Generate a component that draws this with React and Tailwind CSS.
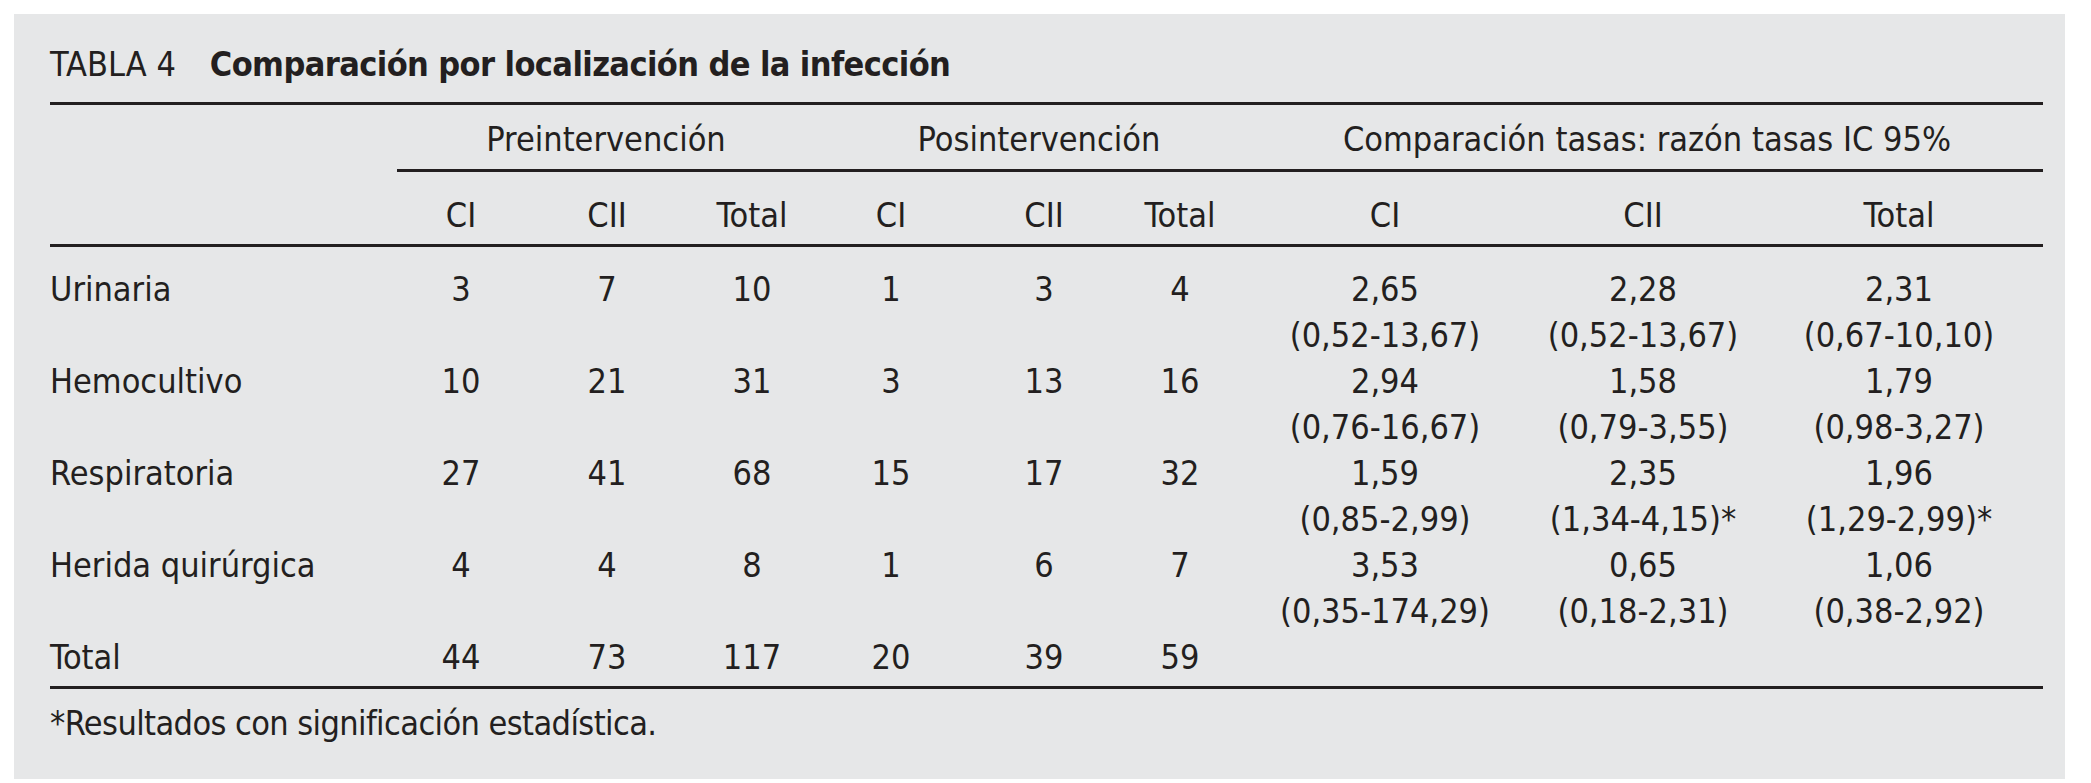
const GRID = 'grid grid-cols-[347px_128px_164px_126px_152px_154px_118px_292px_224px_288px]';

const rows = [
  { label: 'Urinaria', n: ['3', '7', '10', '1', '3', '4'], r: [['2,65', '(0,52-13,67)'], ['2,28', '(0,52-13,67)'], ['2,31', '(0,67-10,10)']] },
  { label: 'Hemocultivo', n: ['10', '21', '31', '3', '13', '16'], r: [['2,94', '(0,76-16,67)'], ['1,58', '(0,79-3,55)'], ['1,79', '(0,98-3,27)']] },
  { label: 'Respiratoria', n: ['27', '41', '68', '15', '17', '32'], r: [['1,59', '(0,85-2,99)'], ['2,35', '(1,34-4,15)*'], ['1,96', '(1,29-2,99)*']] },
  { label: 'Herida quirúrgica', n: ['4', '4', '8', '1', '6', '7'], r: [['3,53', '(0,35-174,29)'], ['0,65', '(0,18-2,31)'], ['1,06', '(0,38-2,92)']] },
];

const Rule = ({ className = '' }) => <div className={`h-[3px] bg-[#231f20] ${className}`} />;

export default function App() {
  return (
    <div className="min-h-screen bg-white pt-[14px] pl-[14px] pr-[26px] pb-[4px]">
      <div className="h-[765px] bg-[#e6e7e8] pt-[27px] pl-[36px] pr-[22px] text-[#231f20] text-[34px] leading-[46px] font-[family-name:'DejaVu_Sans_Condensed','DejaVu_Sans',sans-serif]">
        {/* title */}
        <div className="flex">
          <span>TABLA 4</span>
          <span className="ml-[34px] font-bold tracking-[-0.6px]">Comparación por localización de la infección</span>
        </div>
        <Rule className="mt-[15px]" />

        {/* group headers */}
        <div className={`${GRID} mt-[11px]`}>
          <div />
          <div className="col-span-3 text-center">Preintervención</div>
          <div className="col-span-3 text-center pl-[24px]">Posintervención</div>
          <div className="col-span-3 text-center pl-[12px]">Comparación tasas: razón tasas IC 95%</div>
        </div>
        <div className={`${GRID} mt-[7px]`}>
          <div />
          <Rule className="col-span-9" />
        </div>

        {/* column headers */}
        <div className={`${GRID} mt-[20px] text-center`}>
          <div />
          {['CI', 'CII', 'Total', 'CI', 'CII', 'Total', 'CI', 'CII', 'Total'].map((h, i) => (
            <div key={i}>{h}</div>
          ))}
        </div>
        <Rule className="mt-[6px]" />

        {/* data */}
        <div className="mt-[19px]">
          {rows.map((row) => (
            <div key={row.label} className={`${GRID} h-[92px]`}>
              <div>{row.label}</div>
              {row.n.map((v, i) => (
                <div key={i} className="text-center">{v}</div>
              ))}
              {row.r.map(([v, ci], i) => (
                <div key={i} className="text-center">
                  <div>{v}</div>
                  <div>{ci}</div>
                </div>
              ))}
            </div>
          ))}
          <div className={GRID}>
            <div>Total</div>
            {['44', '73', '117', '20', '39', '59'].map((v, i) => (
              <div key={i} className="text-center">{v}</div>
            ))}
          </div>
        </div>
        <Rule className="mt-[6px]" />

        <div className="mt-[11px] tracking-[-0.6px]">*Resultados con significación estadística.</div>
      </div>
    </div>
  );
}
